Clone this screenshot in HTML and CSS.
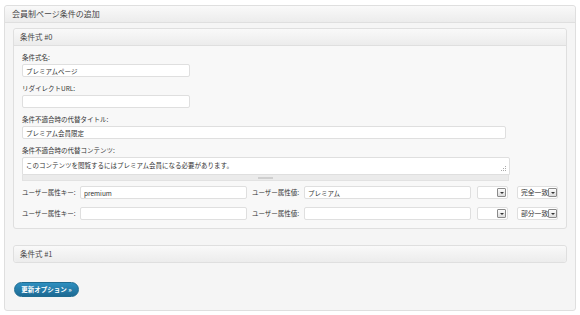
FILE: index.html
```html
<!DOCTYPE html>
<html lang="ja">
<head>
    <meta charset="UTF-8" />
    <title>会員制ページ条件の追加</title>
    <link rel="stylesheet" href="styles.css">
</head>
<body>

    <div class="postbox outer">
        <h3 class="hndle">会員制ページ条件の追加</h3>
        <div class="inside">

            <div class="postbox cond">
                <h3 class="hndle">条件式 #0</h3>
                <div class="cond-body">
                    <div class="field">
                        <label>条件式名:</label>
                        <input type="text" class="short" value="プレミアムページ" />
                    </div>
                    <div class="field">
                        <label>リダイレクトURL:</label>
                        <input type="text" class="short" value="" />
                    </div>
                    <div class="field">
                        <label>条件不適合時の代替タイトル:</label>
                        <input type="text" class="wide" value="プレミアム会員限定" />
                    </div>
                    <div class="field editor-field">
                        <label>条件不適合時の代替コンテンツ:</label>
                        <div class="editor">
                            <div class="textarea">このコンテンツを閲覧するにはプレミアム会員になる必要があります。
                                <svg class="grip-dots" width="7" height="7" viewBox="0 0 7 7">
                                    <rect x="5" y="0" width="1" height="1" fill="#aaa"/>
                                    <rect x="5" y="2" width="1" height="1" fill="#aaa"/>
                                    <rect x="3" y="2" width="1" height="1" fill="#aaa"/>
                                    <rect x="5" y="4" width="1" height="1" fill="#aaa"/>
                                    <rect x="3" y="4" width="1" height="1" fill="#aaa"/>
                                    <rect x="1" y="4" width="1" height="1" fill="#aaa"/>
                                </svg>
                            </div>
                            <div class="resize-bar"><span class="handle"></span></div>
                        </div>
                    </div>

                    <div class="attr-row">
                        <span class="attr-label key">ユーザー属性キー:</span>
                        <input type="text" class="attr-input" value="premium" />
                        <span class="attr-label val">ユーザー属性値:</span>
                        <input type="text" class="attr-input" value="プレミアム" />
                        <div class="select small"><span class="arrow"></span></div>
                        <div class="select match"><span class="sel-text">完全一致</span><span class="arrow"></span></div>
                    </div>
                    <div class="attr-row">
                        <span class="attr-label key">ユーザー属性キー:</span>
                        <input type="text" class="attr-input" value="" />
                        <span class="attr-label val">ユーザー属性値:</span>
                        <input type="text" class="attr-input" value="" />
                        <div class="select small"><span class="arrow"></span></div>
                        <div class="select match"><span class="sel-text">部分一致</span><span class="arrow"></span></div>
                    </div>
                </div>
            </div>

            <div class="postbox cond closed">
                <h3 class="hndle">条件式 #1</h3>
            </div>

            <p class="submit">
                <button class="button-primary">更新オプション &raquo;</button>
            </p>
        </div>
    </div>

</body>
</html>
```
FILE: styles.css
```css
body {
    margin: 0;
    font-family: "Noto Sans CJK JP", "DejaVu Sans", sans-serif;
    color: #333;
    background-color: #fff;
}

.postbox {
    border: 1px solid #dfdfdf;
    border-radius: 3px;
    background-color: #f5f5f5;
}

.hndle {
    margin: 0;
    height: 16px;
    line-height: 16px;
    font-weight: normal;
    color: #464646;
    border-bottom: 1px solid #dfdfdf;
    background: linear-gradient(to bottom, #f9f9f9, #ececec);
    border-radius: 3px 3px 0 0;
}

.outer {
    margin: 5px 4px 0 4px;
    height: 306px;
    box-sizing: border-box;
}

.outer > .hndle {
    font-size: 8px;
    padding: 0 7px;
}

.outer > .inside {
    padding: 5px 8px 0 8px;
}

.cond {
    background-color: #f8f8f8;
}

.cond > .hndle {
    font-size: 7.5px;
    padding: 0 6px;
}

.cond.closed > .hndle {
    border-bottom: none;
    border-radius: 3px;
}

.closed {
    margin-top: 16px;
}

.cond-body {
    padding: 6px 8px 8px 8px;
}

.field {
    margin-bottom: 6px;
}

.field label {
    display: block;
    font-size: 6.5px;
    line-height: 11px;
    height: 11px;
    margin-bottom: 1px;
    color: #333;
}

input[type="text"] {
    display: block;
    height: 13px;
    box-sizing: border-box;
    margin: 0;
    padding: 0 3px;
    border: 1px solid #dfdfdf;
    border-radius: 2px;
    background-color: #fff;
    font-family: inherit;
    font-size: 6.5px;
    color: #333;
    outline: none;
}

.short { width: 168px; }
.wide { width: 484px; }

.editor-field {
    margin-bottom: 5px;
}

.editor {
    width: 488px;
}

.textarea {
    position: relative;
    height: 18px;
    box-sizing: border-box;
    padding: 2px 3px;
    border: 1px solid #dfdfdf;
    border-radius: 2px 2px 0 0;
    background-color: #fff;
    font-size: 6.5px;
    line-height: 10px;
}

.grip-dots {
    position: absolute;
    right: 2px;
    bottom: 1px;
}

.resize-bar {
    height: 6px;
    box-sizing: border-box;
    border: 1px solid #e2e2e2;
    border-top: none;
    background-color: #ebebeb;
    display: flex;
    justify-content: center;
    align-items: flex-end;
    width: 487px;
}

.handle {
    width: 15px;
    height: 2px;
    margin-bottom: 1px;
    background-color: #cfcfcf;
}

.attr-row {
    display: flex;
    align-items: center;
    height: 13px;
    margin-bottom: 8px;
}

.attr-row:last-child {
    margin-bottom: 0;
}

.attr-label {
    font-size: 6.5px;
    line-height: 13px;
    white-space: nowrap;
}

.attr-label.key { width: 58px; }
.attr-label.val { width: 52px; margin-left: 5px; }

.attr-input { width: 167px; }

.select {
    position: relative;
    height: 13px;
    box-sizing: border-box;
    border: 1px solid #dfdfdf;
    border-radius: 2px;
    background-color: #fff;
}

.select.small {
    width: 31px;
    margin-left: 6px;
}

.select.match {
    width: 41px;
    margin-left: 9px;
}

.sel-text {
    position: absolute;
    left: 3px;
    top: 0;
    font-size: 6.8px;
    line-height: 11px;
    white-space: nowrap;
}

.arrow {
    position: absolute;
    right: 0;
    top: 1px;
    width: 9px;
    height: 9px;
    box-sizing: border-box;
    border: 1px solid #8a8a8a;
    border-radius: 1px;
    background: linear-gradient(to bottom, #fdfdfd, #dcdcdc);
}

.select.small .arrow {
    right: 1px;
}

.arrow::after {
    content: "";
    position: absolute;
    left: 2px;
    top: 3px;
    border-left: 2px solid transparent;
    border-right: 2px solid transparent;
    border-top: 2px solid #333;
}

.submit {
    margin: 19px 0 0 1px;
}

.button-primary {
    display: block;
    width: 65px;
    height: 15px;
    padding: 0;
    border: 1px solid #1f6c91;
    border-radius: 8px;
    background: linear-gradient(to bottom, #2e8fc0, #1d6a93);
    color: #fff;
    font-family: inherit;
    font-size: 6.5px;
    font-weight: bold;
    line-height: 13px;
    cursor: pointer;
}
```
